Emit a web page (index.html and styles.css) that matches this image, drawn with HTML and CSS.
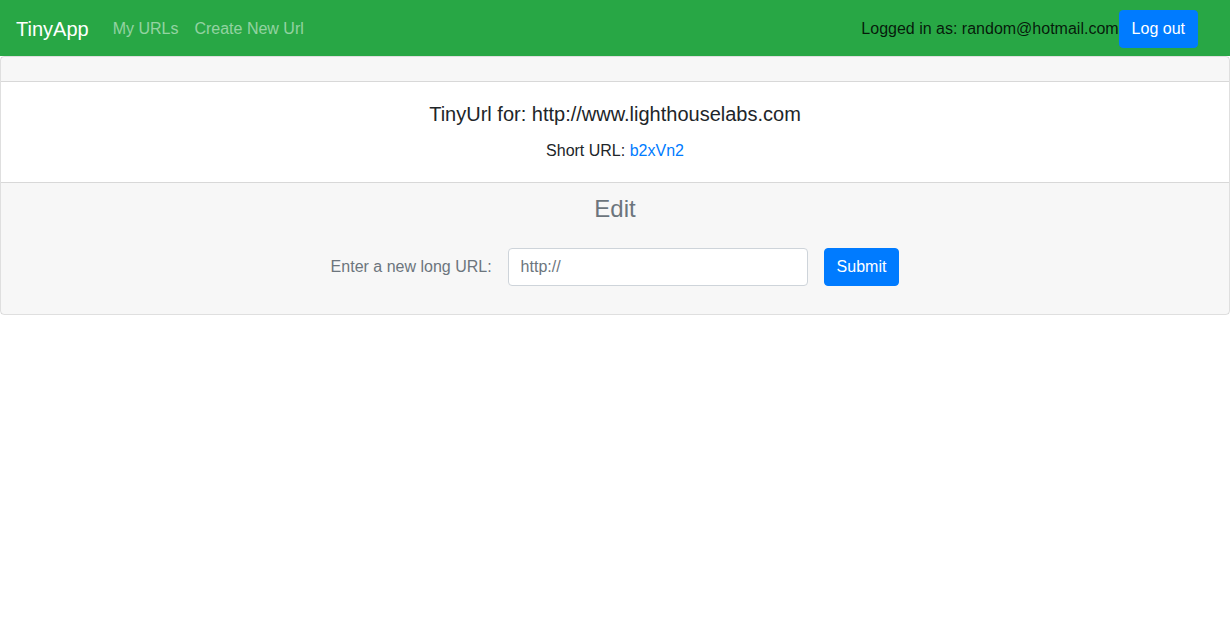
FILE: index.html
```html
<!DOCTYPE html>
<html lang="en">
<head>
<meta charset="utf-8">
<title>TinyApp</title>
<link rel="stylesheet" href="styles.css">
</head>
<body>
<nav class="navbar">
  <a class="brand" href="#">TinyApp</a>
  <div class="nav-links">
    <a class="nav-link" href="#">My URLs</a>
    <a class="nav-link" href="#">Create New Url</a>
  </div>
  <div class="nav-right">
    <span class="user">Logged in as: random@hotmail.com</span>
    <button class="btn btn-primary">Log out</button>
  </div>
</nav>
<main class="card">
  <div class="card-header"></div>
  <div class="card-body">
    <h5 class="card-title">TinyUrl for: http://www.lighthouselabs.com</h5>
    <p class="card-text">Short URL: <a href="#">b2xVn2</a></p>
  </div>
  <div class="card-footer">
    <h3 class="edit-title">Edit</h3>
    <form class="edit-form">
      <label class="form-label" for="longURL">Enter a new long URL:</label>
      <input class="form-control" id="longURL" type="text" placeholder="http://">
      <button class="btn btn-primary" type="button">Submit</button>
    </form>
  </div>
</main>
</body>
</html>
```
FILE: styles.css
```css
* { box-sizing: border-box; }
body {
  margin: 0;
  font-family: "Liberation Sans", Arial, Helvetica, sans-serif;
  font-size: 16px;
  line-height: 1.5;
  color: #212529;
  background: #fff;
}
a { text-decoration: none; color: #007bff; }
.navbar {
  display: flex;
  align-items: center;
  height: 56px;
  padding: 9px 32px 7px 16px;
  background: #28a745;
}
.brand {
  color: #fff;
  font-size: 20px;
  line-height: 30px;
  margin-right: 16px;
}
.nav-links { display: flex; flex: 1; }
.nav-link {
  color: rgba(255,255,255,0.5);
  padding: 8px;
}
.nav-right { display: flex; align-items: center; }
.user { color: rgba(0,0,0,0.85); }
.btn {
  font-family: inherit;
  font-size: 16px;
  line-height: 24px;
  padding: 6px 12px;
  border: 1px solid transparent;
  border-radius: 4px;
  cursor: pointer;
}
.btn-primary { background: #007bff; border-color: #007bff; color: #fff; }
.card {
  display: flex;
  flex-direction: column;
  border: 1px solid rgba(0,0,0,0.125);
  border-radius: 4px;
}
.card-header {
  height: 25px;
  background: rgba(0,0,0,0.03);
  border-bottom: 1px solid rgba(0,0,0,0.125);
}
.card-body {
  padding: 20px;
  text-align: center;
}
.card-title {
  margin: 0 0 12px;
  font-size: 20px;
  font-weight: 400;
  line-height: 24px;
}
.card-text { margin: 0; padding-top: 1px; line-height: 23px; }
.card-footer {
  padding: 12px 20px;
  background: rgba(0,0,0,0.03);
  border-top: 1px solid rgba(0,0,0,0.125);
  text-align: center;
}
.edit-title {
  margin: 0 0 24px;
  font-size: 24px;
  font-weight: 400;
  line-height: 1.2;
  color: #6c757d;
}
.edit-form {
  display: flex;
  justify-content: center;
  align-items: center;
  gap: 16px;
  margin: 0 0 16px;
}
.form-label { color: #6c757d; }
.form-control {
  width: 300px;
  height: 38px;
  padding: 6px 12px;
  font-family: inherit;
  font-size: 16px;
  color: #495057;
  background: #fff;
  border: 1px solid #ced4da;
  border-radius: 4px;
}
.form-control::placeholder { color: #6c757d; }
```
